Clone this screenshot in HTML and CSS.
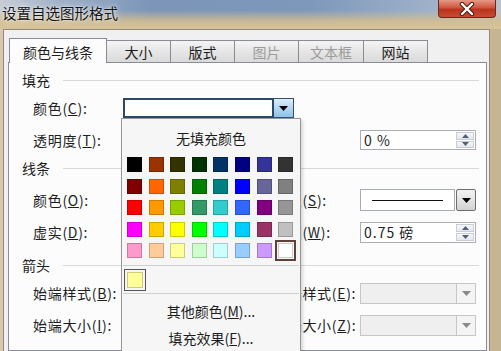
FILE: index.html
```html
<!DOCTYPE html>
<html lang="zh-CN">
<head>
  <meta charset="UTF-8">
  <meta name="viewport" content="width=device-width, initial-scale=1.0">
  <title>设置自选图形格式</title>
  <link rel="stylesheet" href="styles.css">
</head>
<body>
  <div class="dialog">
    <!-- 标题栏 -->
    <div class="titlebar">
      <span class="title">设置自选图形格式</span>
      <div class="btn-close">
        <svg width="18" height="14" viewBox="0 0 18 14">
          <path d="M4 2 L14 12 M14 2 L4 12" stroke="#4a1c14" stroke-width="4.4" stroke-linecap="round"/>
          <path d="M4 2 L14 12 M14 2 L4 12" stroke="#fff" stroke-width="2.4" stroke-linecap="round"/>
        </svg>
      </div>
    </div>

    <div class="client">
      <div class="tabs">
        <div class="tab active">颜色与线条</div>
        <div class="tab">大小</div>
        <div class="tab">版式</div>
        <div class="tab disabled">图片</div>
        <div class="tab disabled">文本框</div>
        <div class="tab">网站</div>
      </div>

      <div class="panel">
        <!-- 填充 -->
        <div class="group-head"><span>填充</span><i class="rule"></i></div>
        <div class="row">
          <label>颜色(<u>C</u>):</label>
          <div class="combo combo-hot">
            <div class="combo-field"></div>
            <div class="combo-btn">
              <svg width="9" height="5" viewBox="0 0 9 5"><path d="M0 0h9L4.5 5z" fill="#000"/></svg>
            </div>
          </div>
        </div>
        <div class="row">
          <label>透明度(<u>T</u>):</label>
          <span></span>
          <span></span>
          <div class="spin">
            <span class="spin-text">0 %</span>
            <div class="spin-btns">
              <div><svg width="7" height="4" viewBox="0 0 7 4"><path d="M0 4h7L3.5 0z" fill="#50607a"/></svg></div>
              <div><svg width="7" height="4" viewBox="0 0 7 4"><path d="M0 0h7L3.5 4z" fill="#50607a"/></svg></div>
            </div>
          </div>
        </div>

        <!-- 线条 -->
        <div class="group-head head-lines"><span>线条</span><i class="rule"></i></div>
        <div class="row">
          <label>颜色(<u>O</u>):</label>
          <div class="combo combo-left">
            <div class="combo-field"></div>
            <div class="combo-btn"><svg width="9" height="5" viewBox="0 0 9 5"><path d="M0 0h9L4.5 5z" fill="#000"/></svg></div>
          </div>
          <label>线型(<u>S</u>):</label>
          <div class="combo combo-line">
            <div class="combo-field"><i class="line-sample"></i></div>
            <div class="combo-btn">
              <svg width="9" height="5" viewBox="0 0 9 5"><path d="M0 0h9L4.5 5z" fill="#000"/></svg>
            </div>
          </div>
        </div>
        <div class="row">
          <label>虚实(<u>D</u>):</label>
          <div class="combo combo-left">
            <div class="combo-field"></div>
            <div class="combo-btn"><svg width="9" height="5" viewBox="0 0 9 5"><path d="M0 0h9L4.5 5z" fill="#000"/></svg></div>
          </div>
          <label>粗细(<u>W</u>):</label>
          <div class="spin spin-weight">
            <span class="spin-text">0.75 磅</span>
            <div class="spin-btns">
              <div><svg width="7" height="4" viewBox="0 0 7 4"><path d="M0 4h7L3.5 0z" fill="#50607a"/></svg></div>
              <div><svg width="7" height="4" viewBox="0 0 7 4"><path d="M0 0h7L3.5 4z" fill="#50607a"/></svg></div>
            </div>
          </div>
        </div>

        <!-- 箭头 -->
        <div class="group-head head-arrows"><span>箭头</span><i class="rule"></i></div>
        <div class="row">
          <label>始端样式(<u>B</u>):</label>
          <span></span>
          <label>末端样式(<u>E</u>):</label>
          <div class="combo combo-off">
            <div class="combo-field"></div>
            <div class="combo-btn"><svg width="9" height="5" viewBox="0 0 9 5"><path d="M0 0h9L4.5 5z" fill="#8a8a8a"/></svg></div>
          </div>
        </div>
        <div class="row">
          <label>始端大小(<u>I</u>):</label>
          <span></span>
          <label>末端大小(<u>Z</u>):</label>
          <div class="combo combo-off">
            <div class="combo-field"></div>
            <div class="combo-btn"><svg width="9" height="5" viewBox="0 0 9 5"><path d="M0 0h9L4.5 5z" fill="#8a8a8a"/></svg></div>
          </div>
        </div>
      </div>
    </div>

    <!-- 颜色下拉面板 -->
    <div class="color-menu">
      <div class="no-fill">无填充颜色</div>
      <div class="swatches">
        <i class="swatch" style="background:#000000"></i>
        <i class="swatch" style="background:#993300"></i>
        <i class="swatch" style="background:#333300"></i>
        <i class="swatch" style="background:#003300"></i>
        <i class="swatch" style="background:#003366"></i>
        <i class="swatch" style="background:#000080"></i>
        <i class="swatch" style="background:#333399"></i>
        <i class="swatch" style="background:#333333"></i>

        <i class="swatch" style="background:#800000"></i>
        <i class="swatch" style="background:#ff6600"></i>
        <i class="swatch" style="background:#808000"></i>
        <i class="swatch" style="background:#008000"></i>
        <i class="swatch" style="background:#008080"></i>
        <i class="swatch" style="background:#0000ff"></i>
        <i class="swatch" style="background:#666699"></i>
        <i class="swatch" style="background:#808080"></i>

        <i class="swatch" style="background:#ff0000"></i>
        <i class="swatch" style="background:#ff9900"></i>
        <i class="swatch" style="background:#99cc00"></i>
        <i class="swatch" style="background:#339966"></i>
        <i class="swatch" style="background:#33cccc"></i>
        <i class="swatch" style="background:#3366ff"></i>
        <i class="swatch" style="background:#800080"></i>
        <i class="swatch" style="background:#969696"></i>

        <i class="swatch" style="background:#ff00ff"></i>
        <i class="swatch" style="background:#ffcc00"></i>
        <i class="swatch" style="background:#ffff00"></i>
        <i class="swatch" style="background:#00ff00"></i>
        <i class="swatch" style="background:#00ffff"></i>
        <i class="swatch" style="background:#00ccff"></i>
        <i class="swatch" style="background:#993366"></i>
        <i class="swatch" style="background:#c0c0c0"></i>

        <i class="swatch" style="background:#ff99cc"></i>
        <i class="swatch" style="background:#ffcc99"></i>
        <i class="swatch" style="background:#ffff99"></i>
        <i class="swatch" style="background:#ccffcc"></i>
        <i class="swatch" style="background:#ccffff"></i>
        <i class="swatch" style="background:#99ccff"></i>
        <i class="swatch" style="background:#cc99ff"></i>
        <i class="swatch selected" style="background:#ffffff"></i>
      </div>
      <div class="menu-sep"></div>
      <div class="recent">
        <div class="recent-frame"><i class="swatch" style="background:#ffff99"></i></div>
      </div>
      <div class="menu-sep sep-tight"></div>
      <div class="menu-items">
        <div class="menu-item">其他颜色(<u>M</u>)...</div>
        <div class="menu-item">填充效果(<u>F</u>)...</div>
      </div>
    </div>
  </div>
</body>
</html>
```

FILE: styles.css
```css
* {
  box-sizing: border-box;
}

body {
  margin: 0;
  font-family: "Noto Sans CJK SC", "Noto Sans", sans-serif;
  font-size: 14px;
  color: #1e1e1e;
}

/* 窗口外框 */
.dialog {
  position: relative;
  width: 501px;
  height: 351px;
  overflow: hidden;
  display: flex;
  flex-direction: column;
  background: linear-gradient(to right, #d6c9b0, #cdbd9c 60%, #c6b592);
}

/* 标题栏（Aero 玻璃） */
.titlebar {
  flex: none;
  height: 29px;
  display: flex;
  justify-content: space-between;
  align-items: flex-start;
  background:
    linear-gradient(to bottom, rgba(214, 190, 142, 0) 35%, rgba(214, 190, 142, 0.85) 72%, #d8c49a 100%),
    linear-gradient(to right, #c7cdd5 0%, #9fb1c8 12%, #7c95b8 30%, #7e98bb 62%, #9db0c9 85%, #b8c3cf 100%);
}
.title {
  padding: 3px 0 0 2px;
  font-size: 14.5px;
  line-height: 20px;
  color: #141414;
  text-shadow: 0 0 6px rgba(255, 255, 255, 0.9), 0 0 2px rgba(255, 255, 255, 0.8);
}
.btn-close {
  width: 58px;
  height: 18px;
  margin-right: 5px;
  display: flex;
  align-items: center;
  justify-content: center;
  border: 1px solid #6b2a1e;
  border-top: 0;
  border-radius: 0 0 4px 4px;
  background: linear-gradient(to bottom, #e59a86, #d0563e 45%, #b93420 55%, #c84a30);
}

/* 对话框客户区 */
.client {
  flex: 1;
  margin: 0 11px 0 3px;
  padding: 8px 2px 0 4px;
  display: flex;
  flex-direction: column;
  border: 1px solid #908a7e;
  border-bottom: 0;
  background: #f0f0f0;
}

/* 选项卡 */
.tabs {
  display: flex;
  align-items: flex-end;
  height: 24px;
  padding-left: 1px;
}
.tab {
  height: 22px;
  min-width: 64px;
  padding: 0 11px;
  display: flex;
  align-items: center;
  justify-content: center;
  border: 1px solid #898c95;
  border-bottom: 0;
  background: linear-gradient(to bottom, #f4f4f4, #e6e6e6 50%, #dadada);
  line-height: 1;
}
.tab + .tab {
  border-left: 0;
}
.tab.active {
  position: relative;
  z-index: 1;
  height: 25px;
  padding: 2px 13px 0;
  margin-bottom: -1px;
  background: #fcfcfc;
}
.tab.disabled {
  color: #9b9b9b;
}

.panel {
  flex: 1;
  padding: 5px 7px 0 13px;
  border: 1px solid #898c95;
  background: #fcfcfc;
}

/* 分组标题 */
.group-head {
  display: flex;
  align-items: center;
  height: 24px;
}
.group-head .rule {
  flex: 1;
  height: 1px;
  margin-left: 13px;
  background: #d9d9d9;
}
.head-lines {
  margin-bottom: 4px;
}
.head-arrows {
  margin-top: 5px;
}

/* 表单行 */
.row {
  display: grid;
  grid-template-columns: 90px 150px 87px 116px;
  align-items: center;
  height: 32px;
  padding-left: 11px;
}
.row label {
  white-space: nowrap;
  line-height: 1;
  letter-spacing: 0.7px;
}

/* 下拉框 */
.combo {
  display: flex;
  height: 21px;
}
.combo-field {
  flex: 1;
  display: flex;
  align-items: center;
  border: 1px solid #a5acb5;
  background: #fff;
}
.combo-btn {
  width: 20px;
  display: flex;
  align-items: center;
  justify-content: center;
}

.combo-hot {
  grid-column: 2 / 4;
  width: 171px;
  height: 20px;
}
.combo-hot .combo-field {
  border: 2px solid #2a4868;
}
.combo-hot .combo-btn {
  border: 1px solid #33516e;
  border-left: 0;
  background: linear-gradient(to bottom, #dcedfa, #b3d7f2 50%, #8ec2ea);
}

.combo-left {
  width: 128px;
}
.combo-left .combo-btn {
  border: 1px solid #707070;
  background: linear-gradient(to bottom, #f2f2f2, #dcdcdc);
}

.combo-line {
  height: 22px;
}
.combo-line .combo-btn {
  margin-left: 1px;
  border: 1px solid #6e6e6e;
  border-radius: 2px;
  background: linear-gradient(to bottom, #f3f3f3, #e4e4e4 50%, #d2d2d2);
}
.line-sample {
  flex: 1;
  height: 1px;
  margin: 0 11px 0 11px;
  background: #111;
}

.combo-off .combo-field {
  border-color: #c6c6c6;
  border-right: 0;
  background: #efefef;
}
.combo-off .combo-btn {
  border: 1px solid #c6c6c6;
  background: #f4f4f4;
}

/* 微调框 */
.spin {
  display: flex;
  height: 20px;
  border: 1px solid #abadb3;
  background: #fff;
}
.spin-weight {
  height: 21px;
}
.spin-text {
  flex: 1;
  padding-left: 3px;
  display: flex;
  align-items: center;
  letter-spacing: 1px;
  line-height: 1;
}
.spin-btns {
  width: 19px;
  display: flex;
  flex-direction: column;
  gap: 1px;
  padding: 1px 1px 1px 0;
}
.spin-btns div {
  flex: 1;
  display: flex;
  align-items: center;
  justify-content: center;
  border: 1px solid #c9ced6;
  background: linear-gradient(to bottom, #f7f8f9, #e3e7ed);
}

/* 颜色下拉面板 */
.color-menu {
  position: absolute;
  z-index: 5;
  left: 121px;
  top: 118px;
  width: 180px;
  height: 250px;
  display: flex;
  flex-direction: column;
  border: 1px solid #979797;
  background: #f6f6f6;
  box-shadow: 2px 2px 3px rgba(0, 0, 0, 0.15);
}
.no-fill {
  height: 38px;
  display: flex;
  align-items: center;
  justify-content: center;
}
.swatches {
  display: grid;
  grid-template-columns: repeat(8, 15px);
  column-gap: 6.6px;
  row-gap: 6.5px;
  padding-left: 5px;
}
.swatch {
  display: block;
  width: 15px;
  height: 15px;
  box-shadow: inset 0 0 0 1px rgba(0, 0, 0, 0.2);
}
.swatch.selected {
  box-shadow: inset 0 0 0 1px rgba(0, 0, 0, 0.2), 0 0 0 1px #f6f6f6, 0 0 0 3px #5e4238;
}
.menu-sep {
  height: 1px;
  margin: 7px 1px 0;
  background: #cfcfcf;
}
.menu-sep.sep-tight {
  margin-top: 2px;
}
.recent {
  display: flex;
  padding: 3px 2px 0;
}
.recent-frame {
  width: 22px;
  height: 22px;
  padding: 2px;
  border: 1px solid #555;
}
.recent-frame .swatch {
  width: 16px;
  height: 16px;
}
.menu-items {
  padding-top: 3px;
}
.menu-item {
  height: 27px;
  display: flex;
  align-items: center;
  justify-content: center;
  line-height: 1;
}
```
